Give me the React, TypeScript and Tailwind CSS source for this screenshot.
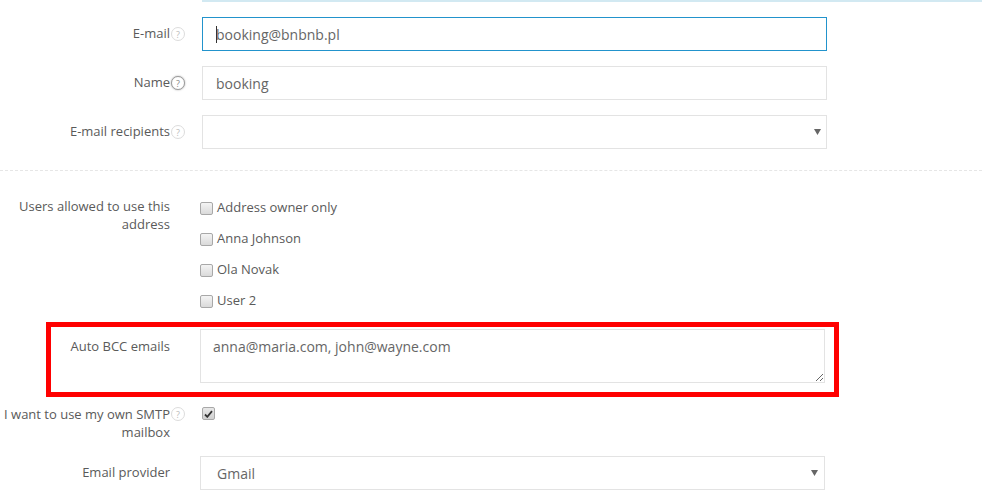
import React from "react";

const font = { fontFamily: '"Open Sans", "Liberation Sans", sans-serif' };

function Help({ active = false }: { active?: boolean }) {
  return (
    <div
      className={
        active
          ? "w-[14px] h-[14px] rounded-full border border-[#9a9a9a] shadow-[0_0_2px_rgba(0,0,0,0.35)] flex items-center justify-center text-[9px] leading-none text-[#888] bg-white"
          : "w-[14px] h-[14px] rounded-full border border-[#dcdcdc] flex items-center justify-center text-[9px] leading-none text-[#bbb] bg-white"
      }
    >
      ?
    </div>
  );
}

function Box({ checked = false }: { checked?: boolean }) {
  return (
    <div
      className={
        checked
          ? "w-[13px] h-[13px] rounded-[2px] border border-[#a8a8a8] bg-gradient-to-b from-[#e8e8e8] to-[#d0d0d0] flex items-center justify-center shrink-0"
          : "w-[13px] h-[13px] rounded-[2px] border border-[#a8a8a8] bg-gradient-to-b from-[#f4f4f4] to-[#dadada] shrink-0"
      }
    >
      {checked && (
        <svg width="9" height="8" viewBox="0 0 9 8">
          <path d="M1 4.5 L3.3 6.8 L8 1.2" stroke="#333" strokeWidth="1.8" fill="none" />
        </svg>
      )}
    </div>
  );
}

function Caret() {
  return (
    <svg width="7" height="6" viewBox="0 0 7 6">
      <polygon points="0,0 7,0 3.5,6" fill="#666" />
    </svg>
  );
}

export default function App() {
  return (
    <div className="w-[982px] h-[502px] bg-white overflow-hidden text-[#5a5a5a]" style={font}>
      <div className="ml-[202px] h-[2px] bg-[#d2e9f2]" />

      {/* E-mail */}
      <div className="mt-[15px] flex items-center h-[34px]">
        <div className="w-[170px] text-right text-[13px]">E-mail</div>
        <div className="w-[16px] pl-[1px]">
          <Help />
        </div>
        <div className="ml-[16px] w-[625px] h-[34px] border border-[#2293cc] flex items-center pl-[13px] text-[14px] text-[#666]">
          <span className="inline-block w-px h-[17px] bg-[#333] -mr-px" />
          booking@bnbnb.pl
        </div>
      </div>

      {/* Name */}
      <div className="mt-[15px] flex items-center h-[34px]">
        <div className="w-[170px] text-right text-[13px]">Name</div>
        <div className="w-[16px] pl-[1px]">
          <Help active />
        </div>
        <div className="ml-[16px] w-[625px] h-[34px] border border-[#e3e3e3] flex items-center pl-[13px] text-[14px] text-[#666]">
          booking
        </div>
      </div>

      {/* E-mail recipients */}
      <div className="mt-[15px] flex items-center h-[34px]">
        <div className="w-[170px] text-right text-[13px]">E-mail recipients</div>
        <div className="w-[16px] pl-[1px]">
          <Help />
        </div>
        <div className="ml-[16px] w-[625px] h-[34px] border border-[#e3e3e3] flex items-center justify-end pr-[5px]">
          <Caret />
        </div>
      </div>

      <div className="mt-[21px] border-t border-dashed border-[#e6e6e6]" />

      {/* Users allowed */}
      <div className="mt-[26px] flex items-start">
        <div className="w-[170px] text-right text-[13px] leading-[18px]">
          Users allowed to use this
          <br />
          address
        </div>
        <div className="ml-[30px] mt-[1px] flex flex-col gap-[11px]">
          {["Address owner only", "Anna Johnson", "Ola Novak", "User 2"].map((u) => (
            <div key={u} className="flex items-center h-[20px] gap-[4px] text-[13px]">
              <Box />
              <span>{u}</span>
            </div>
          ))}
        </div>
      </div>

      {/* Auto BCC */}
      <div className="mt-[11px] ml-[46px] w-[793px] border-[5px] border-[#ff0000] pt-[2px] pb-[9px]">
        <div className="flex items-start">
          <div className="w-[119px] pt-[8px] text-right text-[13px] leading-[18px]">Auto BCC emails</div>
          <textarea
            className="ml-[30px] w-[625px] h-[54px] border border-[#e3e3e3] pl-[12px] pt-[7px] text-[14px] leading-[20px] text-[#666] outline-none"
            style={font}
            defaultValue="anna@maria.com, john@wayne.com"
          />
        </div>
      </div>

      {/* SMTP */}
      <div className="mt-[8px] flex items-start">
        <div className="w-[170px] text-right text-[13px] leading-[18px] whitespace-nowrap">
          I want to use my own SMTP
          <br />
          mailbox
        </div>
        <div className="w-[16px] pl-[1px] pt-[2px]">
          <Help />
        </div>
        <div className="ml-[16px] pt-[2px]">
          <Box checked />
        </div>
      </div>

      {/* Email provider */}
      <div className="mt-[15px] flex items-center h-[34px]">
        <div className="w-[170px] text-right text-[13px]">Email provider</div>
        <div className="ml-[30px] w-[625px] h-[34px] border border-[#e3e3e3] flex items-center justify-between pl-[16px] pr-[6px] text-[14px] text-[#666]">
          <span>Gmail</span>
          <Caret />
        </div>
      </div>
    </div>
  );
}
